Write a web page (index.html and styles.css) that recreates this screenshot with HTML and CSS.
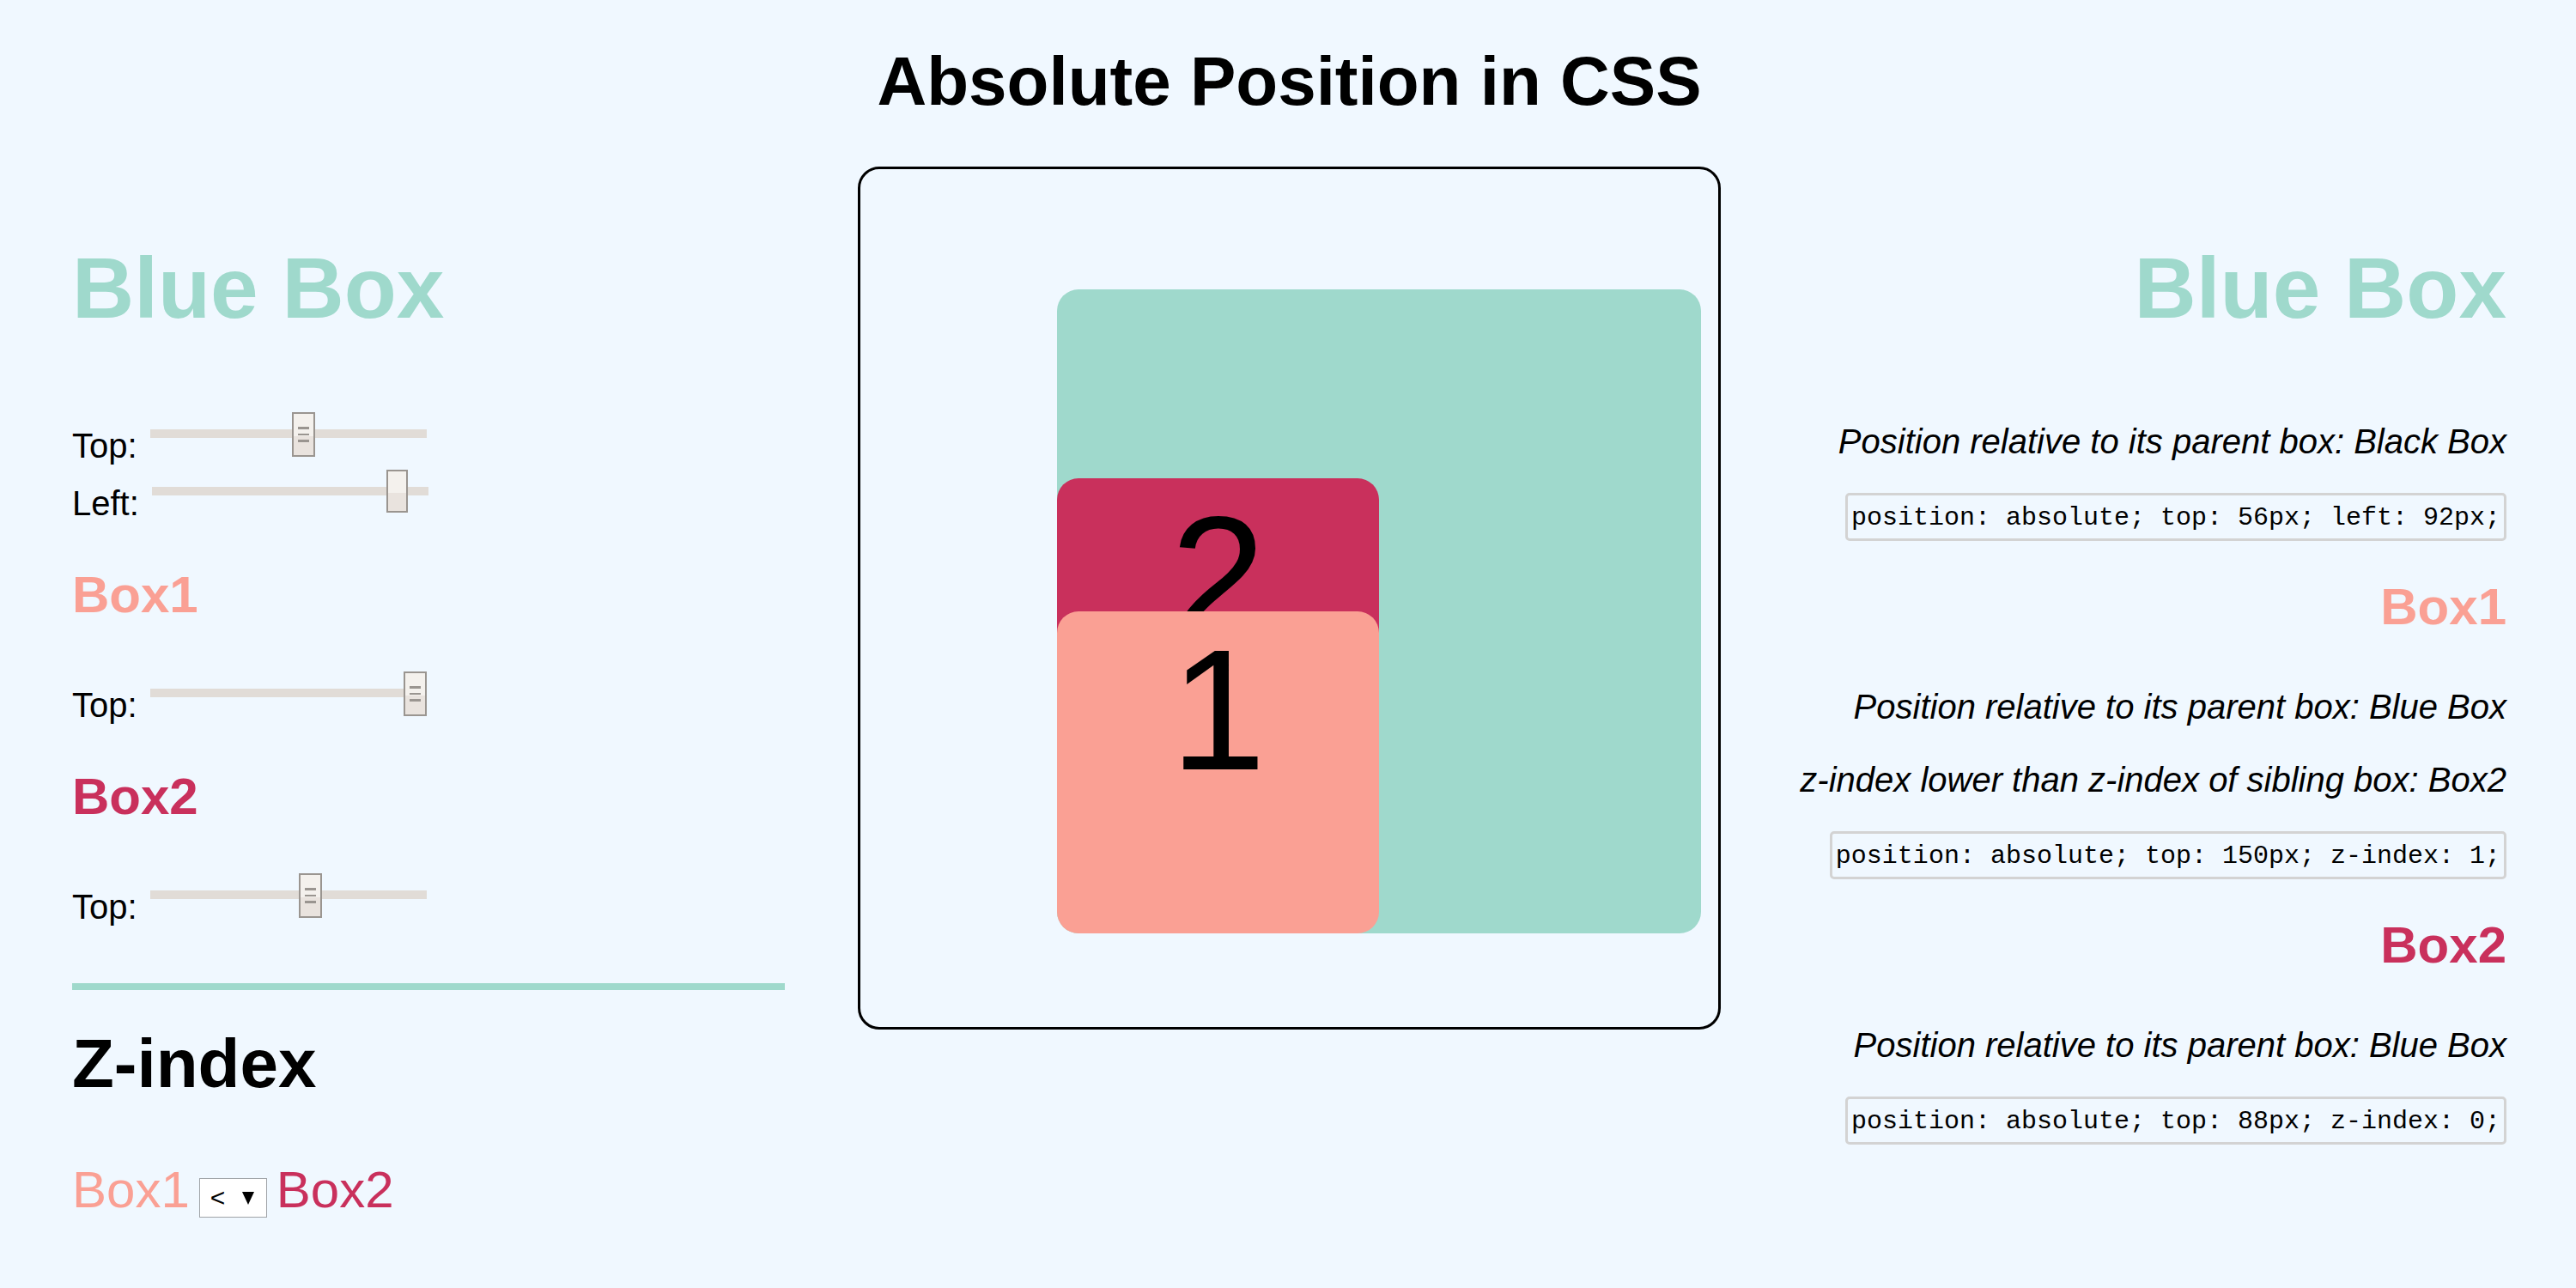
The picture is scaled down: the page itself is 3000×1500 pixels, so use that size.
FILE: index.html
```html
<!DOCTYPE html>
<html lang="en">
<head>
<meta charset="utf-8">
<title>Absolute Position in CSS</title>
<link rel="stylesheet" href="styles.css">
</head>
<body>
<h1 class="title">Absolute Position in CSS</h1>
<main class="layout">
  <section class="controls">
    <h2 class="heading blue">Blue Box</h2>
    <div class="sliders">
      <div class="row"><label for="blue-top">Top:</label><input class="slider" id="blue-top" type="range" min="0" max="100" value="56"></div>
      <div class="row"><label for="blue-left">Left:</label><input class="slider plain" id="blue-left" type="range" min="0" max="100" value="92"></div>
    </div>
    <h3 class="subheading one">Box1</h3>
    <div class="sliders">
      <div class="row"><label for="one-top">Top:</label><input class="slider" id="one-top" type="range" min="0" max="150" value="150"></div>
    </div>
    <h3 class="subheading two">Box2</h3>
    <div class="sliders">
      <div class="row"><label for="two-top">Top:</label><input class="slider" id="two-top" type="range" min="0" max="150" value="88"></div>
    </div>
    <hr class="divider">
    <h2 class="z-heading">Z-index</h2>
    <div class="compare">
      <label class="one" for="order">Box1</label>
      <span class="picker">
        <select id="order"><option selected>&lt;</option><option>&gt;</option></select>
        <svg class="arrow" viewBox="0 0 14 15" aria-hidden="true"><path d="M0 0h14L7 15z"/></svg>
      </span>
      <span class="two">Box2</span>
    </div>
  </section>

  <div class="black-box">
    <div class="blue-box">
      <div class="box box-one">1</div>
      <div class="box box-two">2</div>
    </div>
  </div>

  <section class="notes">
    <h2 class="heading blue">Blue Box</h2>
    <div class="note">
      <p>Position relative to its parent box: Black Box</p>
      <code>position: absolute; top: 56px; left: 92px;</code>
    </div>
    <h3 class="subheading one">Box1</h3>
    <div class="note">
      <p>Position relative to its parent box: Blue Box</p>
      <p>z-index lower than z-index of sibling box: Box2</p>
      <code>position: absolute; top: 150px; z-index: 1;</code>
    </div>
    <h3 class="subheading two">Box2</h3>
    <div class="note">
      <p>Position relative to its parent box: Blue Box</p>
      <code>position: absolute; top: 88px; z-index: 0;</code>
    </div>
  </section>
</main>
</body>
</html>
```
FILE: styles.css
```css
* {
  box-sizing: border-box;
}

body {
  margin: 0;
  padding: 49px 81px 40px 84px;
  background: #f0f8ff;
  color: #000;
  font-family: "Liberation Sans", Arial, sans-serif;
  font-size: 40px;
  line-height: 45px;
}

h1, h2, h3, p {
  margin: 0;
}

.title {
  font-size: 80px;
  line-height: 92px;
  text-align: center;
}

.layout {
  display: grid;
  grid-template-columns: 1fr 1005px 1fr;
  column-gap: 85px;
  align-items: start;
  margin-top: 53px;
}

.controls,
.notes {
  padding-top: 84px;
}

.heading {
  font-size: 100px;
  line-height: 114px;
}

.subheading {
  font-size: 60px;
  line-height: 68px;
}

.blue { color: #9fd9cc; }
.one { color: #faa094; }
.two { color: #c9305c; }

/* Sliders */
.sliders {
  display: grid;
  gap: 5px;
  margin: 55px 0 50px;
}

.heading + .sliders {
  margin-top: 88px;
}

.row {
  display: flex;
  align-items: flex-end;
  gap: 15px;
  height: 62px;
}

.slider {
  appearance: none;
  align-self: flex-start;
  width: 322px;
  height: 52px;
  margin: 0;
  background: linear-gradient(#e1dcd7, #e1dcd7) 0 20px / 100% 10px no-repeat;
}

.slider::-webkit-slider-thumb {
  appearance: none;
  width: 27px;
  height: 52px;
  border: 2px solid #9a9590;
  background:
    linear-gradient(#9a9590, #9a9590) 5px 15px / 13px 3px no-repeat,
    linear-gradient(#9a9590, #9a9590) 5px 23px / 13px 2px no-repeat,
    linear-gradient(#9a9590, #9a9590) 5px 30px / 13px 3px no-repeat,
    linear-gradient(#f4f1ed 54%, #e9e3de 54%);
}

.slider.plain {
  height: 50px;
}

.slider.plain::-webkit-slider-thumb {
  width: 25px;
  height: 50px;
  background: linear-gradient(#f4f1ed 54%, #e9e3de 54%);
}

.divider {
  height: 8px;
  margin: 66px 0 40px;
  border: 0;
  background: #9fd9cc;
}

.z-heading {
  font-size: 80px;
  line-height: 92px;
}

.compare {
  display: flex;
  gap: 11px;
  margin-top: 67px;
  font-size: 60px;
  line-height: 68px;
}

.picker {
  position: relative;
  align-self: flex-end;
  width: 79px;
  height: 48px;
}

.picker select {
  display: block;
  appearance: none;
  width: 100%;
  height: 46px;
  padding: 0 12px;
  border: 1px solid #a0a4a8;
  border-radius: 0;
  background: #fff;
  color: #000;
  font: 30px/44px "Liberation Sans", Arial, sans-serif;
}

.arrow {
  position: absolute;
  top: 16px;
  right: 15px;
  width: 14px;
  height: 15px;
  pointer-events: none;
}

/* Demo area */
.black-box {
  position: relative;
  height: 1005px;
  border: 3px solid #000;
  border-radius: 25px;
}

.blue-box {
  position: absolute;
  top: 140px;
  left: 229px;
  width: 750px;
  height: 750px;
  border-radius: 25px;
  background: #9fd9cc;
}

.box {
  position: absolute;
  left: 0;
  width: 375px;
  height: 375px;
  border-radius: 25px;
  font-size: 200px;
  line-height: 230px;
  text-align: center;
}

.box-one {
  top: 375px;
  z-index: 1;
  background: #faa094;
}

.box-two {
  top: 220px;
  z-index: 0;
  background: #c9305c;
}

/* Descriptions */
.notes {
  text-align: right;
}

.note {
  display: flex;
  flex-direction: column;
  align-items: flex-end;
  gap: 40px;
  margin: 60px 0 43px;
}

.heading + .note {
  margin-top: 100px;
}

.note p {
  font-style: italic;
}

.note code {
  margin-top: -3px;
  padding: 2px 4px 0;
  border: 3px solid #d3d3d3;
  border-radius: 5px;
  font: 30px/48px "Liberation Mono", monospace;
  white-space: nowrap;
}
```
